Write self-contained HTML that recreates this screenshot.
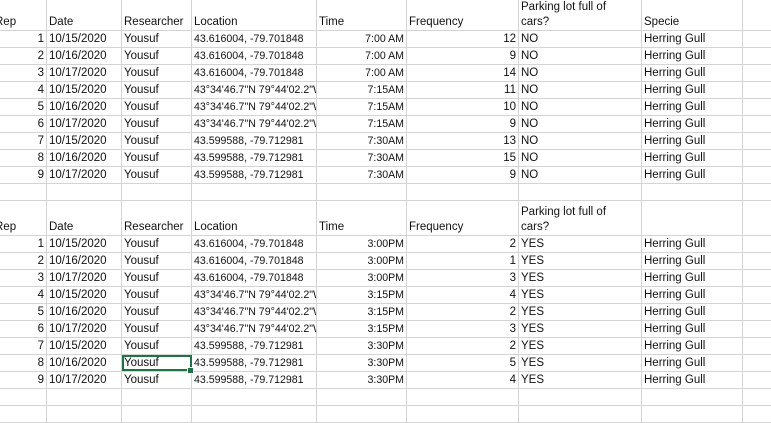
<!DOCTYPE html>
<html><head><meta charset="utf-8"><style>
*{box-sizing:border-box;margin:0;padding:0}
body{width:771px;height:417px;overflow:hidden;background:#fff;font-family:"Liberation Sans",sans-serif;font-size:11.5px;color:#111}
.r{display:flex;height:17px;border-bottom:1px solid #d4d4d4;white-space:nowrap}
.r>div{border-right:1px solid #d4d4d4;overflow:hidden;padding:0 2px;display:flex;align-items:flex-end;line-height:15px;flex:none}
.a{width:47px;justify-content:flex-end}.b{width:75px}.c{width:70px}.d{width:125px;font-size:10.6px}
.e{width:90px;justify-content:flex-end;font-size:10.6px}.f{width:112px;justify-content:flex-end}.g{width:123px}.h{width:101px}.i{width:40px}
.hd .a{justify-content:flex-start;padding-left:0}
.hd .a span{margin-left:-5px}
.hd .e,.hd .f{justify-content:flex-start}
.hd .d,.hd .e{font-size:11.5px}
.g2{flex-direction:column;align-items:flex-start!important;justify-content:flex-end}
.sel{position:relative;outline:2px solid #217346;outline-offset:-2px;overflow:visible!important}
.sel:after{content:"";position:absolute;right:-3px;bottom:-3px;width:5px;height:5px;background:#217346;border:1px solid #fff}
</style></head><body>
<div class="r hd" style="height:31px"><div class="a"><span>Rep</span></div><div class="b">Date</div><div class="c">Researcher</div><div class="d">Location</div><div class="e">Time</div><div class="f">Frequency</div><div class="g g2"><span>Parking lot full of</span><span>cars?</span></div><div class="h">Specie</div><div class="i"></div></div>
<div class="r"><div class="a">1</div><div class="b">10/15/2020</div><div class="c">Yousuf</div><div class="d">43.616004, -79.701848</div><div class="e">7:00 AM</div><div class="f">12</div><div class="g">NO</div><div class="h">Herring Gull</div><div class="i"></div></div>
<div class="r"><div class="a">2</div><div class="b">10/16/2020</div><div class="c">Yousuf</div><div class="d">43.616004, -79.701848</div><div class="e">7:00 AM</div><div class="f">9</div><div class="g">NO</div><div class="h">Herring Gull</div><div class="i"></div></div>
<div class="r"><div class="a">3</div><div class="b">10/17/2020</div><div class="c">Yousuf</div><div class="d">43.616004, -79.701848</div><div class="e">7:00 AM</div><div class="f">14</div><div class="g">NO</div><div class="h">Herring Gull</div><div class="i"></div></div>
<div class="r"><div class="a">4</div><div class="b">10/15/2020</div><div class="c">Yousuf</div><div class="d">43°34'46.7"N 79°44'02.2"W</div><div class="e">7:15AM</div><div class="f">11</div><div class="g">NO</div><div class="h">Herring Gull</div><div class="i"></div></div>
<div class="r"><div class="a">5</div><div class="b">10/16/2020</div><div class="c">Yousuf</div><div class="d">43°34'46.7"N 79°44'02.2"W</div><div class="e">7:15AM</div><div class="f">10</div><div class="g">NO</div><div class="h">Herring Gull</div><div class="i"></div></div>
<div class="r"><div class="a">6</div><div class="b">10/17/2020</div><div class="c">Yousuf</div><div class="d">43°34'46.7"N 79°44'02.2"W</div><div class="e">7:15AM</div><div class="f">9</div><div class="g">NO</div><div class="h">Herring Gull</div><div class="i"></div></div>
<div class="r"><div class="a">7</div><div class="b">10/15/2020</div><div class="c">Yousuf</div><div class="d">43.599588, -79.712981</div><div class="e">7:30AM</div><div class="f">13</div><div class="g">NO</div><div class="h">Herring Gull</div><div class="i"></div></div>
<div class="r"><div class="a">8</div><div class="b">10/16/2020</div><div class="c">Yousuf</div><div class="d">43.599588, -79.712981</div><div class="e">7:30AM</div><div class="f">15</div><div class="g">NO</div><div class="h">Herring Gull</div><div class="i"></div></div>
<div class="r"><div class="a">9</div><div class="b">10/17/2020</div><div class="c">Yousuf</div><div class="d">43.599588, -79.712981</div><div class="e">7:30AM</div><div class="f">9</div><div class="g">NO</div><div class="h">Herring Gull</div><div class="i"></div></div>
<div class="r"><div class="a"></div><div class="b"></div><div class="c"></div><div class="d"></div><div class="e"></div><div class="f"></div><div class="g"></div><div class="h"></div><div class="i"></div></div>
<div class="r hd" style="height:35px"><div class="a"><span>Rep</span></div><div class="b">Date</div><div class="c">Researcher</div><div class="d">Location</div><div class="e">Time</div><div class="f">Frequency</div><div class="g g2"><span>Parking lot full of</span><span>cars?</span></div><div class="h"></div><div class="i"></div></div>
<div class="r"><div class="a">1</div><div class="b">10/15/2020</div><div class="c">Yousuf</div><div class="d">43.616004, -79.701848</div><div class="e">3:00PM</div><div class="f">2</div><div class="g">YES</div><div class="h">Herring Gull</div><div class="i"></div></div>
<div class="r"><div class="a">2</div><div class="b">10/16/2020</div><div class="c">Yousuf</div><div class="d">43.616004, -79.701848</div><div class="e">3:00PM</div><div class="f">1</div><div class="g">YES</div><div class="h">Herring Gull</div><div class="i"></div></div>
<div class="r"><div class="a">3</div><div class="b">10/17/2020</div><div class="c">Yousuf</div><div class="d">43.616004, -79.701848</div><div class="e">3:00PM</div><div class="f">3</div><div class="g">YES</div><div class="h">Herring Gull</div><div class="i"></div></div>
<div class="r"><div class="a">4</div><div class="b">10/15/2020</div><div class="c">Yousuf</div><div class="d">43°34'46.7"N 79°44'02.2"W</div><div class="e">3:15PM</div><div class="f">4</div><div class="g">YES</div><div class="h">Herring Gull</div><div class="i"></div></div>
<div class="r"><div class="a">5</div><div class="b">10/16/2020</div><div class="c">Yousuf</div><div class="d">43°34'46.7"N 79°44'02.2"W</div><div class="e">3:15PM</div><div class="f">2</div><div class="g">YES</div><div class="h">Herring Gull</div><div class="i"></div></div>
<div class="r"><div class="a">6</div><div class="b">10/17/2020</div><div class="c">Yousuf</div><div class="d">43°34'46.7"N 79°44'02.2"W</div><div class="e">3:15PM</div><div class="f">3</div><div class="g">YES</div><div class="h">Herring Gull</div><div class="i"></div></div>
<div class="r"><div class="a">7</div><div class="b">10/15/2020</div><div class="c">Yousuf</div><div class="d">43.599588, -79.712981</div><div class="e">3:30PM</div><div class="f">2</div><div class="g">YES</div><div class="h">Herring Gull</div><div class="i"></div></div>
<div class="r"><div class="a">8</div><div class="b">10/16/2020</div><div class="c sel">Yousuf</div><div class="d">43.599588, -79.712981</div><div class="e">3:30PM</div><div class="f">5</div><div class="g">YES</div><div class="h">Herring Gull</div><div class="i"></div></div>
<div class="r"><div class="a">9</div><div class="b">10/17/2020</div><div class="c">Yousuf</div><div class="d">43.599588, -79.712981</div><div class="e">3:30PM</div><div class="f">4</div><div class="g">YES</div><div class="h">Herring Gull</div><div class="i"></div></div>
<div class="r"><div class="a"></div><div class="b"></div><div class="c"></div><div class="d"></div><div class="e"></div><div class="f"></div><div class="g"></div><div class="h"></div><div class="i"></div></div>
<div class="r"><div class="a"></div><div class="b"></div><div class="c"></div><div class="d"></div><div class="e"></div><div class="f"></div><div class="g"></div><div class="h"></div><div class="i"></div></div>
</body></html>
